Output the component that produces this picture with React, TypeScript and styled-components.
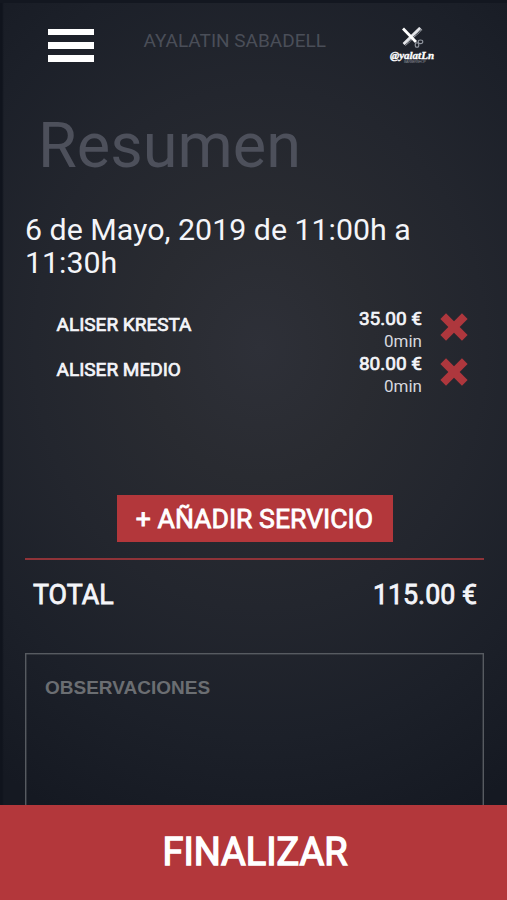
import React from "react";
import styled, { createGlobalStyle } from "styled-components";

const GlobalStyle = createGlobalStyle`
  * { box-sizing: border-box; }
  body { margin: 0; background: #141821; }
`;

const Screen = styled.div`
  width: 507px;
  height: 900px;
  overflow: hidden;
  display: flex;
  flex-direction: column;
  font-family: Roboto, sans-serif;
  color: #f4f5f9;
  border-top: 3px solid #131720;
  background:
    linear-gradient(90deg, #10141d 0, #10141d 2px, transparent 4px),
    radial-gradient(ellipse 450px 520px at 260px 345px, #2e3038 0%, #292b31 25%, #23262e 50%, #1c2029 75%, #151922 100%);
`;

const Header = styled.header`
  height: 80px;
  display: flex;
  align-items: flex-start;
  padding: 0 72px 0 48px;
`;

const MenuButton = styled.button`
  display: flex;
  flex-direction: column;
  gap: 6.6px;
  width: 46px;
  margin: 25.5px 0 0;
  padding: 0;
  border: 0;
  background: none;
`;

const MenuBar = styled.span`
  height: 6.8px;
  background: #fff;
`;

const ShopName = styled.div`
  flex: 1;
  margin-top: 26px;
  padding-left: 49.5px;
  font-size: 19px;
  line-height: 23px;
  white-space: nowrap;
  color: #4a4e58;
`;

const Logo = styled.svg`
  width: 46px;
  height: 40px;
  margin-top: 21px;
`;

const Title = styled.h1`
  margin: 22px 0 -1px 38px;
  font-size: 63px;
  line-height: 82px;
  font-weight: 400;
  color: #4d505b;
`;

const Content = styled.main`
  display: flex;
  flex-direction: column;
  flex: 1;
  min-height: 0;
  overflow: hidden;
  padding: 26.5px 23px 0 25px;
`;

const DateText = styled.p`
  flex-shrink: 0;
  margin: 0;
  font-size: 30.35px;
  line-height: 33px;
`;

const Services = styled.ul`
  list-style: none;
  flex: 0 0 187.5px;
  margin: 28.5px 0 0;
  padding: 0 16px 0 31.5px;
`;

const ServiceRow = styled.li`
  display: flex;
  height: 44.5px;
`;

const ServiceName = styled.span`
  flex: 1;
  padding-top: 6px;
  font-size: 19px;
  line-height: 24px;
  -webkit-text-stroke: 0.7px currentColor;
`;

const ServiceCost = styled.div`
  display: flex;
  flex-direction: column;
  align-items: flex-end;
  width: 80px;
`;

const Price = styled.span`
  font-size: 19px;
  line-height: 24px;
  -webkit-text-stroke: 0.7px currentColor;
`;

const Duration = styled.span`
  font-size: 17px;
  line-height: 21px;
  color: #d6d8df;
`;

const RemoveButton = styled.button`
  width: 28px;
  height: 28px;
  margin: 6px 0 0 18px;
  padding: 0;
  border: 0;
  background: none;
  svg { display: block; }
`;

const AddButton = styled.button`
  align-self: center;
  flex: 0 0 47.5px;
  width: 276px;
  padding: 0;
  border: 0;
  background: #b3373b;
  color: #fff;
  font: 400 26.6px/47px Roboto, sans-serif;
  white-space: nowrap;
  -webkit-text-stroke: 0.8px currentColor;
`;

const TotalRow = styled.div`
  flex-shrink: 0;
  display: flex;
  justify-content: space-between;
  margin-top: 16px;
  padding: 17px 7px 0 8px;
  border-top: 2px solid #8f3338;
  font-size: 26.8px;
  line-height: 36px;
  -webkit-text-stroke: 0.8px currentColor;
`;

const Notes = styled.textarea`
  display: block;
  width: 100%;
  height: 200px;
  margin-top: 40px;
  padding: 22px 19px;
  flex-shrink: 0;
  resize: none;
  outline: 0;
  border: 1px solid #575b61;
  box-shadow: inset 0 0 0 0.5px #4d5157;
  background: transparent;
  color: #fff;
  font: 700 19px/24px "Liberation Sans", sans-serif;
  &::placeholder { color: #6b6e72; opacity: 1; }
`;

const FinishButton = styled.button`
  flex: 0 0 95px;
  padding: 0 0 2px 3px;
  border: 0;
  background: #b3373b;
  color: #fff;
  font: 400 37.9px/48px Roboto, sans-serif;
  -webkit-text-stroke: 1.4px currentColor;
`;

const services = [
  { name: "ALISER KRESTA", price: "35.00 €", duration: "0min" },
  { name: "ALISER MEDIO", price: "80.00 €", duration: "0min" },
];

export default function App() {
  return (
    <>
      <GlobalStyle />
      <Screen>
        <Header>
          <MenuButton aria-label="Menu">
            <MenuBar />
            <MenuBar />
            <MenuBar />
          </MenuButton>
          <ShopName>AYALATIN SABADELL</ShopName>
          <Logo viewBox="0 0 46 40">
            <path d="M32 4.5 15.5 20.5" stroke="#a5a8af" strokeWidth="4" strokeDasharray="1 0.6" />
            <path d="M31 4 14.5 20" stroke="#e4e5e9" strokeWidth="2.6" />
            <path d="M14 4.5 27 18" stroke="#fff" strokeWidth="2.8" />
            <g fill="none" stroke="#9297a0" strokeWidth="1.1">
              <ellipse cx="28" cy="21" rx="1.8" ry="2.3" />
              <ellipse cx="31.5" cy="17.8" rx="2.3" ry="1.8" />
            </g>
            <text x="1" y="34.5" fontFamily="Liberation Serif, serif" fontSize="11" fontWeight="700" fontStyle="italic" fill="#fff" stroke="#fff" strokeWidth="0.35" textLength="44" lengthAdjust="spacingAndGlyphs">@yalatLn</text>
            <text x="15" y="39" fontFamily="Liberation Sans, sans-serif" fontSize="3.6" fill="#83878f" textLength="22">BARBERSHOP</text>
          </Logo>
        </Header>
        <Title>Resumen</Title>
        <Content>
          <DateText>6 de Mayo, 2019 de 11:00h a 11:30h</DateText>
          <Services>
            {services.map((service) => (
              <ServiceRow key={service.name}>
                <ServiceName>{service.name}</ServiceName>
                <ServiceCost>
                  <Price>{service.price}</Price>
                  <Duration>{service.duration}</Duration>
                </ServiceCost>
                <RemoveButton aria-label="Eliminar">
                  <svg width="28" height="28" viewBox="0 0 28 28">
                    <path d="M3.2 3.2 24.8 24.8M24.8 3.2 3.2 24.8" stroke="#ae373d" strokeWidth="8" />
                  </svg>
                </RemoveButton>
              </ServiceRow>
            ))}
          </Services>
          <AddButton>+ AÑADIR SERVICIO</AddButton>
          <TotalRow>
            <span>TOTAL</span>
            <span>115.00 €</span>
          </TotalRow>
          <Notes placeholder="OBSERVACIONES" />
        </Content>
        <FinishButton>FINALIZAR</FinishButton>
      </Screen>
    </>
  );
}
